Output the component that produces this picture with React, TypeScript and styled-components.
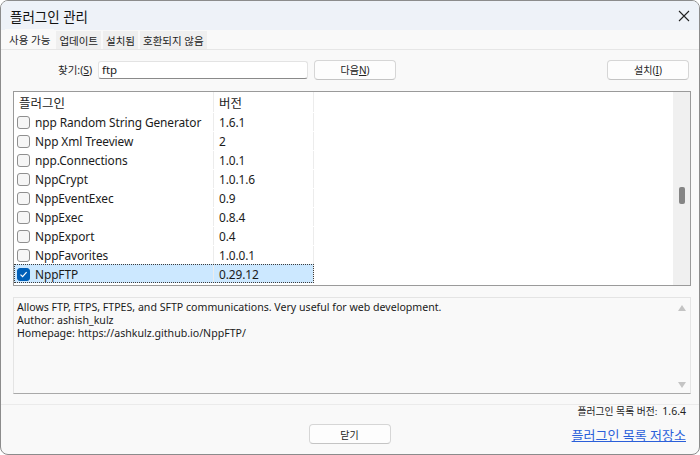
import React from 'react';
import styled, { createGlobalStyle } from 'styled-components';

const GlobalStyle = createGlobalStyle`
  html, body {
    margin: 0;
    padding: 0;
    background: #ffffff;
  }
  * {
    box-sizing: border-box;
  }
`;

const FONT = `"Noto Sans", "Noto Sans CJK KR", sans-serif`;

const Window = styled.div`
  width: 700px;
  height: 455px;
  display: flex;
  flex-direction: column;
  background: #f9f9f9;
  border: 1px solid #8c8c8c;
  border-radius: 8px;
  overflow: hidden;
  font-family: ${FONT};
  color: #1b1b1b;
`;

const TitleBar = styled.div`
  height: 29px;
  display: flex;
  align-items: center;
  justify-content: space-between;
  padding: 0 8px 0 9px;
  background: #eef2f8;
`;

const Title = styled.div`
  font-size: 13.5px;
  color: #111;
  padding-top: 1px;
`;

const CloseBtn = styled.div`
  width: 14px;
  height: 14px;
  display: flex;
  align-items: center;
  justify-content: center;
`;

const TabStrip = styled.div`
  height: 20px;
  display: flex;
  align-items: flex-end;
  padding-left: 4px;
  background: #f9f9f9;
  border-bottom: 1px solid #e6e6e6;
`;

const Tab = styled.div<{ $active?: boolean }>`
  height: ${p => (p.$active ? '20px' : '18px')};
  display: flex;
  align-items: center;
  padding: 0 ${p => (p.$active ? '4px' : '3px')};
  margin-right: 2px;
  font-size: 10.5px;
  background: ${p => (p.$active ? '#f9f9f9' : '#efefef')};
  color: #222;
`;

const SearchRow = styled.div`
  display: flex;
  align-items: center;
  height: 21px;
  margin: 9px 10px 0 0;
  padding-left: 57px;
`;

const Label = styled.div`
  font-size: 10.5px;
  width: 40px;
  color: #222;
  u {
    text-decoration: underline;
  }
`;

const Input = styled.div`
  width: 210px;
  height: 18px;
  background: #ffffff;
  border: 1px solid #e3e3e3;
  border-bottom: 1px solid #8a8a8a;
  border-radius: 3px;
  font-size: 11.5px;
  padding: 0 3px;
  display: flex;
  align-items: center;
`;

const Button = styled.div<{ $width?: number }>`
  width: ${p => p.$width || 82}px;
  height: 20px;
  display: flex;
  align-items: center;
  justify-content: center;
  background: #fdfdfd;
  border: 1px solid #d6d6d6;
  border-bottom-color: #c4c4c4;
  border-radius: 4px;
  font-size: 10px;
  color: #222;
`;

const Spacer = styled.div`
  flex: 1;
`;

const ListBox = styled.div`
  margin: 11px 8px 0 12px;
  height: 195px;
  border: 1px solid #9a9a9a;
  background: #ffffff;
  display: flex;
`;

const Table = styled.div`
  flex: 1;
  display: flex;
  flex-direction: column;
`;

const HeaderRow = styled.div`
  height: 20px;
  display: grid;
  grid-template-columns: 200px 100px;
  font-size: 12.5px;
  color: #222;
`;

const HeaderCell = styled.div<{ $pad: number }>`
  display: flex;
  align-items: center;
  padding-left: ${p => p.$pad}px;
  border-right: 1px solid #ececec;
`;

const Row = styled.div<{ $selected?: boolean }>`
  height: 19px;
  width: 300px;
  display: grid;
  grid-template-columns: 200px 100px;
  font-size: 11.9px;
  letter-spacing: -0.1px;
  color: #1b1b1b;
  padding-top: 1px;
  background: ${p => (p.$selected ? '#cce8ff' : 'transparent')};
  outline: ${p => (p.$selected ? '1px dotted #3c3c3c' : 'none')};
  outline-offset: -1px;
`;

const Cell = styled.div`
  display: flex;
  align-items: center;
  gap: 5px;
  padding-left: 3px;
  border-right: 1px solid #ececec;
  white-space: nowrap;
`;

const VerCell = styled(Cell)`
  padding-left: 5px;
`;

const Check = styled.div<{ $checked?: boolean }>`
  width: 13px;
  height: 13px;
  flex-shrink: 0;
  border-radius: 3px;
  border: 1px solid ${p => (p.$checked ? '#005fb8' : '#8f8f8f')};
  background: ${p => (p.$checked ? '#005fb8' : '#f6f6f6')};
  display: flex;
  align-items: center;
  justify-content: center;
`;

const ScrollTrack = styled.div`
  width: 17px;
  background: #f0f0f0;
  display: flex;
  justify-content: center;
  padding-top: 95px;
`;

const Thumb = styled.div`
  width: 6px;
  height: 17px;
  border-radius: 2px;
  background: #858585;
`;

const DescBox = styled.div`
  margin: 11px 8px 0 12px;
  height: 97px;
  background: #f9f9f9;
  border: 1px solid #e4e4e4;
  border-bottom: 1px solid #a9a9a9;
  display: flex;
`;

const DescText = styled.div`
  flex: 1;
  padding: 3px 3px;
  font-size: 10.6px;
  line-height: 13px;
  color: #1b1b1b;
`;

const DescLine = styled.div`
  height: 13px;
  white-space: nowrap;
`;

const DescScroll = styled.div`
  width: 17px;
  display: flex;
  flex-direction: column;
  justify-content: space-between;
  align-items: center;
  padding: 7px 0 5px;
`;

const Arrow = styled.div<{ $down?: boolean }>`
  width: 0;
  height: 0;
  border-left: 4px solid transparent;
  border-right: 4px solid transparent;
  ${p =>
    p.$down
      ? 'border-top: 6px solid #c4c4c4;'
      : 'border-bottom: 6px solid #c4c4c4;'}
`;

const Footer = styled.div`
  margin-top: 10px;
  flex: 1;
  border-top: 1px solid #ebebeb;
  display: grid;
  grid-template-columns: 1fr auto 1fr;
  grid-template-rows: 12px auto;
  padding: 0 13px 0 12px;
`;

const VersionInfo = styled.div`
  grid-column: 1 / 4;
  display: flex;
  justify-content: flex-end;
  align-items: center;
  gap: 5px;
  font-size: 9.8px;
  color: #222;
  b {
    font-weight: 400;
    font-size: 10.5px;
  }
`;

const CloseRow = styled.div`
  grid-column: 2;
  padding-top: 7px;
`;

const LinkCell = styled.div`
  grid-column: 3;
  display: flex;
  justify-content: flex-end;
  align-items: flex-start;
  padding-top: 9px;
`;

const Link = styled.a`
  font-size: 13px;
  line-height: 18px;
  color: #2b5fd9;
  text-decoration: underline;
  cursor: pointer;
`;

const plugins = [
  { name: 'npp Random String Generator', ver: '1.6.1' },
  { name: 'Npp Xml Treeview', ver: '2' },
  { name: 'npp.Connections', ver: '1.0.1' },
  { name: 'NppCrypt', ver: '1.0.1.6' },
  { name: 'NppEventExec', ver: '0.9' },
  { name: 'NppExec', ver: '0.8.4' },
  { name: 'NppExport', ver: '0.4' },
  { name: 'NppFavorites', ver: '1.0.0.1' },
  { name: 'NppFTP', ver: '0.29.12', checked: true },
];

function App() {
  return (
    <>
      <GlobalStyle />
      <Window>
        <TitleBar>
          <Title>플러그인 관리</Title>
          <CloseBtn>
            <svg width="12" height="12" viewBox="0 0 12 12">
              <path d="M1 1 L11 11 M11 1 L1 11" stroke="#222" strokeWidth="1.1" />
            </svg>
          </CloseBtn>
        </TitleBar>
        <TabStrip>
          <Tab $active>사용 가능</Tab>
          <Tab>업데이트</Tab>
          <Tab>설치됨</Tab>
          <Tab>호환되지 않음</Tab>
        </TabStrip>
        <SearchRow>
          <Label>
            찾기:(<u>S</u>)
          </Label>
          <Input>ftp</Input>
          <Button style={{ marginLeft: 6 }}>
            다음<u>N</u>)
          </Button>
          <Spacer />
          <Button>
            설치(<u>I</u>)
          </Button>
        </SearchRow>
        <ListBox>
          <Table>
            <HeaderRow>
              <HeaderCell $pad={5}>플러그인</HeaderCell>
              <HeaderCell $pad={5}>버전</HeaderCell>
            </HeaderRow>
            {plugins.map(p => (
              <Row key={p.name} $selected={p.checked}>
                <Cell>
                  <Check $checked={p.checked}>
                    {p.checked && (
                      <svg width="9" height="9" viewBox="0 0 9 9">
                        <path d="M1.5 4.6 L3.6 6.6 L7.6 2.2" stroke="#fff" strokeWidth="1.2" fill="none" />
                      </svg>
                    )}
                  </Check>
                  {p.name}
                </Cell>
                <VerCell>{p.ver}</VerCell>
              </Row>
            ))}
          </Table>
          <ScrollTrack>
            <Thumb />
          </ScrollTrack>
        </ListBox>
        <DescBox>
          <DescText>
            <DescLine>
              Allows FTP, FTPS, FTPES, and SFTP communications. Very useful for web development.
            </DescLine>
            <DescLine>Author: ashish_kulz</DescLine>
            <DescLine>Homepage: https://ashkulz.github.io/NppFTP/</DescLine>
          </DescText>
          <DescScroll>
            <Arrow />
            <Arrow $down />
          </DescScroll>
        </DescBox>
        <Footer>
          <VersionInfo>
            플러그인 목록 버전: <b>1.6.4</b>
          </VersionInfo>
          <CloseRow>
            <Button>닫기</Button>
          </CloseRow>
          <LinkCell>
            <Link>플러그인 목록 저장소</Link>
          </LinkCell>
        </Footer>
      </Window>
    </>
  );
}

export default App;
